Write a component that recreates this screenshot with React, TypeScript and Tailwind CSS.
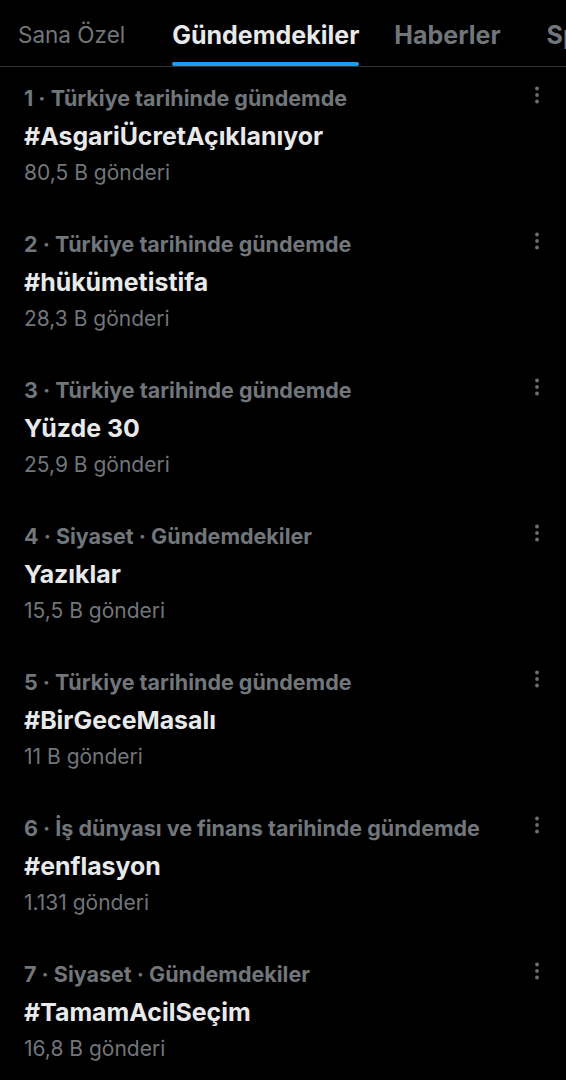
import React from "react";

const trends = [
  { cat: "1 · Türkiye tarihinde gündemde", title: "#AsgariÜcretAçıklanıyor", count: "80,5 B gönderi" },
  { cat: "2 · Türkiye tarihinde gündemde", title: "#hükümetistifa", count: "28,3 B gönderi" },
  { cat: "3 · Türkiye tarihinde gündemde", title: "Yüzde 30", count: "25,9 B gönderi" },
  { cat: "4 · Siyaset · Gündemdekiler", title: "Yazıklar", count: "15,5 B gönderi" },
  { cat: "5 · Türkiye tarihinde gündemde", title: "#BirGeceMasalı", count: "11 B gönderi" },
  { cat: "6 · İş dünyası ve finans tarihinde gündemde", title: "#enflasyon", count: "1.131 gönderi" },
  { cat: "7 · Siyaset · Gündemdekiler", title: "#TamamAcilSeçim", count: "16,8 B gönderi" },
];

const Dots = () => (
  <svg width="6" height="18" viewBox="0 0 6 18" className="text-[#6b6f73]">
    <circle cx="3" cy="2.5" r="1.9" fill="currentColor" />
    <circle cx="3" cy="9" r="1.9" fill="currentColor" />
    <circle cx="3" cy="15.5" r="1.9" fill="currentColor" />
  </svg>
);

const Tab = ({ label, active, muted, className }: { label: string; active?: boolean; muted?: boolean; className?: string }) => (
  <div className={`flex flex-col shrink-0 h-[66px] ${className ?? ""}`}>
    <div
      className={`pt-[20px] leading-[30px] whitespace-nowrap ${
        active
          ? "text-[25px] font-bold text-[#e7e9ea]"
          : muted
          ? "text-[22.5px] font-normal text-[#71767b]"
          : "text-[25px] font-bold text-[#71767b]"
      }`}
    >
      {label}
    </div>
    <div className="mt-auto">
      {active ? <div className="h-[4px] rounded-full bg-[#1d9bf0]" /> : <div className="h-[4px]" />}
    </div>
  </div>
);

export default function App() {
  return (
    <div className="w-[566px] h-[1080px] overflow-hidden bg-black" style={{ fontFamily: 'Inter, "Liberation Sans", sans-serif' }}>
      {/* tabs; the last one runs off the right edge like in the app */}
      <div className="flex pl-[18px] border-b border-[#2f3336] overflow-hidden">
        <Tab label="Sana Özel" muted />
        <Tab label="Gündemdekiler" active className="ml-[47px]" />
        <Tab label="Haberler" className="ml-[35px]" />
        <Tab label="Spor" className="ml-[46px]" />
      </div>
      {trends.map((t) => (
        <div key={t.title} className="flex pl-[24px] pr-[26px] pt-[17px] pb-[26px]">
          <div className="flex-1 min-w-0">
            <div className="text-[21.5px] leading-[28px] font-bold text-[#71767b] whitespace-nowrap">{t.cat}</div>
            <div className="mt-[6px] text-[24.9px] leading-[36px] font-bold text-[#e7e9ea]">{t.title}</div>
            <div className="mt-[5px] text-[21px] leading-[28px] text-[#71767b]">{t.count}</div>
          </div>
          <div className="pt-[2px]">
            <Dots />
          </div>
        </div>
      ))}
    </div>
  );
}
